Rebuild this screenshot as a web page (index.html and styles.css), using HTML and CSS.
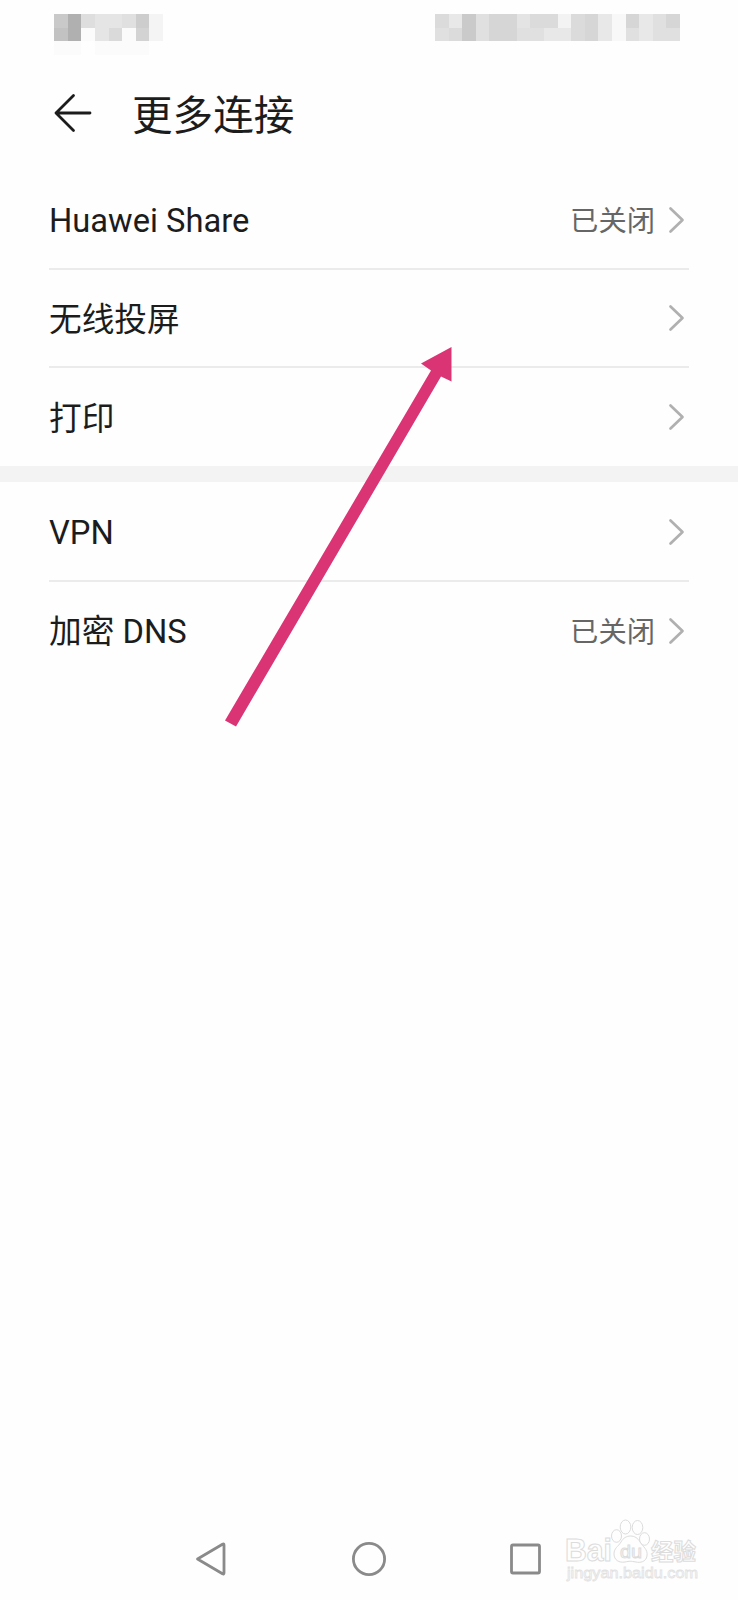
FILE: index.html
```html
<!DOCTYPE html>
<html lang="zh-CN">
<head>
<meta charset="utf-8">
<title>更多连接</title>
<link rel="stylesheet" href="styles.css">
</head>
<body>
<div class="screen">
  <div class="status-bar">
    <svg class="mosaic" width="109" height="41" viewBox="0 0 8 3" preserveAspectRatio="none" shape-rendering="crispEdges">
      <path fill="#c9c9c9" d="M0 0h1v1H0z"/><path fill="#c2c2c2" d="M0 1h1v1H0z"/>
      <path fill="#b0b0b0" d="M1 0h1v2H1z"/>
      <path fill="#dedede" d="M2 0h1v1H2z"/><path fill="#e5e5e5" d="M3 0h2v1H3zM3 1h1v1H3z"/>
      <path fill="#dadada" d="M4 1h1v1H4z"/><path fill="#e0e0e0" d="M5 0h1v1H5z"/>
      <path fill="#cdcdcd" d="M6 0h1v1H6z"/><path fill="#d3d3d3" d="M6 1h1v1H6z"/>
      <path fill="#f4f4f4" d="M7 0h1v2H7z"/><path fill="#fbfbfb" d="M2 1h1v1H2zM5 1h1v1H5zM0 2h2v1H0zM3 2h4v1H3z"/>
    </svg>
    <svg class="mosaic" width="245" height="41" viewBox="0 0 18 3" preserveAspectRatio="none" shape-rendering="crispEdges">
      <path fill="#e0e0e0" d="M0 0h18v2H0z"/>
      <path fill="#dbdbdb" d="M0 0h1v1H0zM1 1h1v1H1zM7 0h2v1H7zM10 0h1v2H10z"/>
      <path fill="#e8e8e8" d="M1 0h1v1H1zM8 1h2v1H8zM12 0h1v2H12zM15 0h1v2H15z"/>
      <path fill="#cacaca" d="M2 0h1v2H2z"/><path fill="#d6d6d6" d="M4 0h2v2H4zM11 0h1v2H11zM14 0h1v1H14zM17 0h1v1H17z"/>
      <path fill="#e4e4e4" d="M6 0h1v1H6z"/>
      <path fill="#f3f3f3" d="M9 0h1v1H9z"/><path fill="#f8f8f8" d="M13 0h1v2H13z"/>
    </svg>
  </div>

  <header class="header">
    <svg class="back" width="40" height="40" viewBox="0 0 40 40"><path d="M20.500 2.500L3 20l17.500 17.500M3 20h34"/></svg>
    <h1 class="title">更多连接</h1>
  </header>

  <main>
    <section class="group">
      <div class="row"><span class="label">Huawei Share</span><span class="state">已关闭</span><svg class="chevron" width="17" height="28" viewBox="0 0 17 28"><path d="M2.500 2.500L14.500 14l-12 11.500"/></svg></div>
      <div class="row"><span class="label">无线投屏</span><svg class="chevron" width="17" height="28" viewBox="0 0 17 28"><path d="M2.500 2.500L14.500 14l-12 11.500"/></svg></div>
      <div class="row"><span class="label">打印</span><svg class="chevron" width="17" height="28" viewBox="0 0 17 28"><path d="M2.500 2.500L14.500 14l-12 11.500"/></svg></div>
    </section>
    <div class="band"></div>
    <section class="group">
      <div class="row"><span class="label">VPN</span><svg class="chevron" width="17" height="28" viewBox="0 0 17 28"><path d="M2.500 2.500L14.500 14l-12 11.500"/></svg></div>
      <div class="row"><span class="label">加密 DNS</span><span class="state">已关闭</span><svg class="chevron" width="17" height="28" viewBox="0 0 17 28"><path d="M2.500 2.500L14.500 14l-12 11.500"/></svg></div>
    </section>
  </main>

  <nav class="nav">
    <svg width="38" height="38" viewBox="0 0 38 38"><path d="M5.500 19L30.500 4.200Q32 3.500 32 5v28q0 1.500-1.500.8L5.500 19z"/></svg>
    <svg width="38" height="38" viewBox="0 0 38 38"><circle cx="19" cy="19" r="15.600"/></svg>
    <svg width="38" height="38" viewBox="0 0 38 38"><rect x="4.500" y="5" width="28" height="28" rx="1.500"/></svg>
  </nav>

  <svg class="pointer" width="230" height="385" viewBox="0 0 230 385"><path d="M227.500 4v34.500l-10.500-5L12 383.500 1 377.500 207 27.500l-10-7z"/></svg>

  <svg class="watermark" width="150" height="74" viewBox="0 0 150 74">
    <g class="brand">
      <text x="9" y="46" font-size="31" textLength="47" lengthAdjust="spacingAndGlyphs">Bai</text>
      <ellipse cx="60.500" cy="21" rx="5" ry="6.300"/>
      <ellipse cx="69.500" cy="12" rx="5.300" ry="7"/>
      <ellipse cx="81.500" cy="12.500" rx="5.300" ry="7"/>
      <ellipse cx="88.500" cy="24" rx="5" ry="6.300"/>
      <path d="M65 27c4-8 15-8 19 0 3 5 8 7 7 14-1 6-7 7-11 6-6-1-6-1-11 0-6 1-11-2-11-8 0-6 4-7 7-12z"/>
      <text class="du" x="64" y="43" font-size="19" textLength="22" lengthAdjust="spacingAndGlyphs">du</text>
      <text class="cjk" x="95" y="45" font-size="22.500" textLength="45" lengthAdjust="spacingAndGlyphs">经验</text>
    </g>
    <text class="site" x="11" y="63" font-size="15.500" textLength="131" lengthAdjust="spacingAndGlyphs">jingyan.baidu.com</text>
  </svg>
</div>
</body>
</html>
```
FILE: styles.css
```css
body {
  margin: 0;
  background: #fefefe;
  color: #1c1c1c;
  font-family: Roboto, "Noto Sans CJK SC", sans-serif;
}

.screen {
  position: relative;
  box-sizing: border-box;
  height: 1600px;
  display: flex;
  flex-direction: column;
  overflow: hidden;
}

.status-bar {
  box-sizing: border-box;
  height: 56px;
  padding: 14px 58px 0 54px;
  display: flex;
  justify-content: space-between;
}

.header {
  box-sizing: border-box;
  height: 115px;
  padding: 0 0 1px 53px;
  display: flex;
  align-items: center;
  gap: 39px;
}

.back {
  fill: none;
  stroke: #1c1c1c;
  stroke-width: 2.8;
  stroke-linecap: round;
  stroke-linejoin: round;
}

.title {
  margin: 0;
  padding-top: 5px;
  font-size: 40.6px;
  font-weight: 400;
  line-height: 60px;
}

.group {
  padding: 0 49px;
}

.row {
  box-sizing: border-box;
  height: 98.5px;
  padding: 1px 4px 0 0;
  display: flex;
  align-items: center;
  border-bottom: 2px solid #ebebeb;
}

.row:last-child {
  height: 97.5px;
  border-bottom: 0;
}

.band + .group .row:first-child {
  height: 99.5px;
  padding-top: 2px;
}

.label {
  flex: 1;
  padding-top: 3px;
  font-size: 32.7px;
  line-height: 48px;
}

.state {
  margin-right: 13px;
  padding-top: 5px;
  font-size: 28.3px;
  line-height: 42px;
  color: #666;
}

.chevron {
  fill: none;
  stroke: #b0b0b0;
  stroke-width: 2.7;
  stroke-linecap: round;
  stroke-linejoin: round;
}

.band {
  height: 16.5px;
  background: #f3f3f3;
}

.nav {
  margin-top: auto;
  padding: 0 193px 22px 192px;
  display: flex;
  justify-content: space-between;
}

.nav svg {
  fill: none;
  stroke: #8a8a8a;
  stroke-width: 2.8;
  stroke-linejoin: round;
}

.pointer {
  position: absolute;
  left: 224px;
  top: 343px;
  fill: #db3475;
}

.watermark {
  position: absolute;
  left: 556px;
  top: 1515px;
}

.brand {
  fill: #fefefe;
  stroke: #dcdcdc;
  stroke-width: 1;
  font-family: "Liberation Sans", sans-serif;
  font-weight: 700;
}

.du {
  font-weight: 400;
}

.cjk {
  font-family: "Noto Sans CJK SC", sans-serif;
}

.site {
  fill: #fefefe;
  stroke: #e2e2e2;
  stroke-width: 0.8;
  font-family: "Liberation Sans", sans-serif;
}
```
